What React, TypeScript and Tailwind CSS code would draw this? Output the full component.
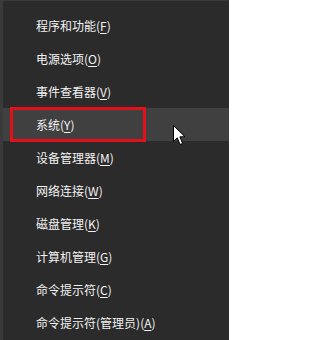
import React from "react";

type MenuItem = {
  label: string;
  key: string;
  suffix?: string;
};

const items: MenuItem[] = [
  { label: "程序和功能", key: "F" },
  { label: "电源选项", key: "O" },
  { label: "事件查看器", key: "V" },
  { label: "系统", key: "Y" },
  { label: "设备管理器", key: "M" },
  { label: "网络连接", key: "W" },
  { label: "磁盘管理", key: "K" },
  { label: "计算机管理", key: "G" },
  { label: "命令提示符", key: "C" },
  { label: "命令提示符(管理员)", key: "A" },
];

const HOVERED = 3;

function Cursor() {
  return (
    <svg
      className="absolute left-[170px] top-[17px]"
      width="13"
      height="21"
      viewBox="0 0 13 21"
    >
      <path
        d="M0.5 0.5 L0.5 16.5 L4.3 12.8 L7 19.5 L9.6 18.4 L6.9 11.8 L12 11.8 Z"
        fill="#ffffff"
        stroke="#000000"
        strokeWidth="1"
        strokeLinejoin="miter"
      />
    </svg>
  );
}

export default function App() {
  return (
    <div
      className="relative h-[340px] w-[229px] overflow-hidden border-l-[3px] border-t border-l-[#3a3a3a] border-t-[#3a3a3a] bg-[#2b2b2b] text-[12px] text-[#f2f2f2]"
      style={{ fontFamily: '"Noto Sans CJK SC", "Noto Sans", sans-serif' }}
    >
      <ul className="flex flex-col pt-[8px]">
        {items.map((item, i) => (
          <li
            key={item.key}
            className={
              i === HOVERED
                ? "relative flex h-[33px] items-center bg-[#404040] pl-[33px]"
                : "relative flex h-[33px] items-center pl-[33px]"
            }
          >
            <span>
              {item.label}(<span className="underline underline-offset-2">{item.key}</span>)
            </span>
            {i === HOVERED && (
              <>
                <div className="absolute left-[7px] top-[-1px] h-[35px] w-[136px] border-[3px] border-[#e3101a]" />
                <Cursor />
              </>
            )}
          </li>
        ))}
      </ul>
    </div>
  );
}
